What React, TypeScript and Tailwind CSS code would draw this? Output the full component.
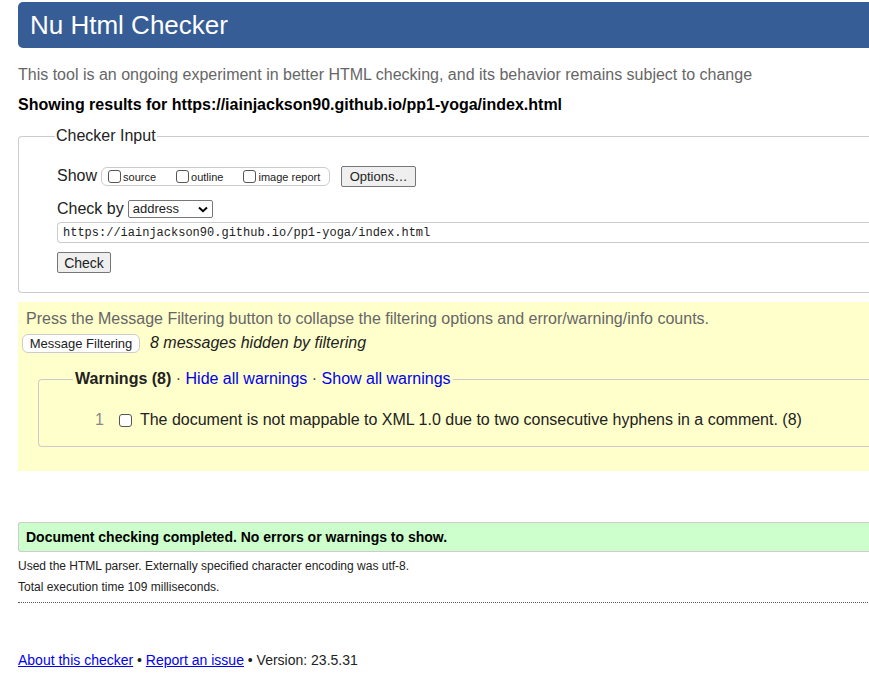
export default function App() {
  return (
    <div className="h-[694px] w-[869px] overflow-hidden bg-white font-['Liberation_Sans',Arial,sans-serif] text-[#222]">
      <div className="w-[920px] pl-[18px] pt-[2px]">
        <header className="flex h-[46px] items-center rounded-l-[5px] bg-[#365d95] pl-[12px]">
          <h1 className="text-[26px] leading-none text-white">Nu Html Checker</h1>
        </header>

        <p className="mt-[17px] text-[16px] leading-[20px] text-[#666]">
          This tool is an ongoing experiment in better HTML checking, and its behavior remains subject to change
        </p>
        <p className="mt-[10px] text-[16px] font-bold leading-[20px] text-black">
          Showing results for https://iainjackson90.github.io/pp1-yoga/index.html
        </p>

        <fieldset className="mt-[12px] h-[166px] rounded-l-[4px] border border-r-0 border-[#ccc] pl-[38px]">
          <legend className="-ml-[2px] px-[1px] text-[16px] leading-[18px]">Checker Input</legend>

          <div className="mt-[21px] flex h-[20px] items-center leading-[20px]">
            <span className="text-[16px]">Show</span>
            <div className="ml-[4px] flex h-[19px] w-[229px] items-center rounded-[6px] border border-[#ccc] pl-[6px] text-[11px]">
              <label className="flex items-center">
                <span className="inline-block h-[13px] w-[13px] rounded-[3px] border border-[#555] bg-white" />
                <span className="ml-[2px] mt-[2px]">source</span>
              </label>
              <label className="ml-[20px] flex items-center">
                <span className="inline-block h-[13px] w-[13px] rounded-[3px] border border-[#555] bg-white" />
                <span className="ml-[2px] mt-[2px]">outline</span>
              </label>
              <label className="ml-[20px] flex items-center">
                <span className="inline-block h-[13px] w-[13px] rounded-[3px] border border-[#555] bg-white" />
                <span className="ml-[2px] mt-[2px]">image report</span>
              </label>
            </div>
            <button className="ml-[11px] h-[21px] w-[75px] rounded-[2px] border border-[#767676] bg-[#efefef] text-[13px] leading-none">
              Options…
            </button>
          </div>

          <div className="mt-[13px] flex h-[20px] items-center leading-[20px]">
            <span className="text-[16px]">Check by</span>
            <div className="ml-[4px] flex h-[18px] w-[85px] items-center justify-between rounded-[2px] border border-[#767676] px-[4px] text-[13px]">
              <span>address</span>
              <svg width="10" height="7" viewBox="0 0 10 7">
                <path d="M1 1.5 L5 5.2 L9 1.5" fill="none" stroke="#000" strokeWidth="2" />
              </svg>
            </div>
          </div>

          <div className="mt-[3px] flex h-[21px] items-center rounded-l-[4px] border border-r-0 border-[#ccc] pl-[5px] font-['Liberation_Mono',monospace] text-[12px] text-[#222]">
            https://iainjackson90.github.io/pp1-yoga/index.html
          </div>

          <button className="mt-[9px] block h-[21px] w-[54px] rounded-[2px] border border-[#767676] bg-[#efefef] text-[14px] leading-none">
            Check
          </button>
        </fieldset>

        <section className="mt-[9px] h-[169px] bg-[#ffffcc] pt-[8px]">
          <p className="pl-[8px] text-[16px] leading-[18px] text-[#666]">
            Press the Message Filtering button to collapse the filtering options and error/warning/info counts.
          </p>
          <div className="mt-[3px] flex items-center pl-[4px]">
            <button className="h-[19px] w-[118px] rounded-[6px] border border-[#ccc] bg-white text-[13px] leading-none">
              Message Filtering
            </button>
            <span className="ml-[10px] text-[16px] italic">8 messages hidden by filtering</span>
          </div>

          <fieldset className="ml-[20px] mt-[15px] h-[77px] rounded-l-[4px] border border-r-0 border-[#ccc] pl-[34px]">
            <legend className="px-[2px] text-[16px] leading-[18px]">
              <b>Warnings (8)</b>
              <span className="text-[#444]"> · </span>
              <a className="text-[#0000ee]">Hide all warnings</a>
              <span className="text-[#444]"> · </span>
              <a className="text-[#0000ee]">Show all warnings</a>
            </legend>
            <div className="mt-[20px] flex items-center text-[16px]">
              <span className="ml-[22px] text-[#888]">1</span>
              <span className="ml-[15px] inline-block h-[13px] w-[13px] rounded-[3px] border border-[#555] bg-white" />
              <span className="ml-[8px] text-[#222]">
                The document is not mappable to XML 1.0 due to two consecutive hyphens in a comment. (8)
              </span>
            </div>
          </fieldset>
        </section>

        <div className="mt-[51px] flex h-[30px] items-center rounded-l-[3px] border border-r-0 border-[#ccc] bg-[#ccffcc] pl-[7px]">
          <b className="text-[14px] text-black">Document checking completed. No errors or warnings to show.</b>
        </div>

        <p className="mt-[7px] text-[12px] leading-[14px] text-[#222]">
          Used the HTML parser. Externally specified character encoding was utf-8.
        </p>
        <p className="mt-[7px] text-[12px] leading-[14px] text-[#222]">Total execution time 109 milliseconds.</p>
        <div className="mt-[8px] border-t border-dotted border-[#555]" />

        <p className="mt-[47px] text-[14px] text-[#222]">
          <a className="text-[#0000ee] underline">About this checker</a> •{" "}
          <a className="text-[#0000ee] underline">Report an issue</a> • Version: 23.5.31
        </p>
      </div>
    </div>
  );
}
